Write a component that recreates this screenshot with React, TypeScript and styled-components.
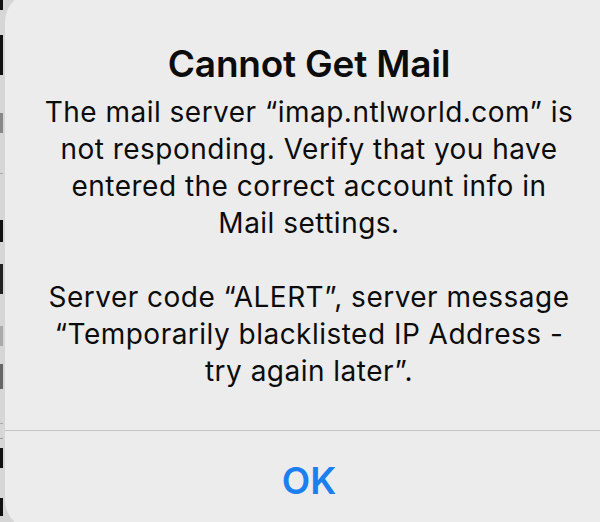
import React from "react";
import styled, { createGlobalStyle } from "styled-components";

const Global = createGlobalStyle`
  html, body { margin: 0; padding: 0; }
  body { background: #d3d3d3; font-family: Inter, "Noto Sans", sans-serif; }
  #root { width: 600px; height: 522px; overflow: hidden; }
`;

const Screen = styled.div`
  display: flex;
  width: 600px;
  height: 522px;
  overflow: hidden;
  background: #d6d6d6;
`;

const Strip = styled.div`
  flex: 0 0 5px;
  display: flex;
  flex-direction: column;
`;

const Bar = styled.div<{ $h: number; $gap: number; $c: string; $w?: number }>`
  height: ${(p) => p.$h}px;
  margin-top: ${(p) => p.$gap}px;
  width: ${(p) => p.$w ?? 3}px;
  background: ${(p) => p.$c};
`;

const Card = styled.div`
  flex: 0 0 608px;
  margin-top: -8px;
  height: 538px;
  background: #ececec;
  border-radius: 30px;
  display: flex;
  flex-direction: column;
  color: #0c0c0c;
`;

const Content = styled.div`
  display: flex;
  flex-direction: column;
  align-items: center;
  padding: 50px 0 0;
  height: 438px;
  box-sizing: border-box;
`;

const Title = styled.h1`
  margin: 0;
  font-size: 37px;
  font-weight: 600;
  line-height: 44px;
  letter-spacing: -0.2px;
  text-align: center;
`;

const Message = styled.p`
  margin: 8px 0 0;
  font-size: 28px;
  font-weight: 400;
  line-height: 37px;
  letter-spacing: 0.48px;
  text-align: center;
  white-space: pre;
`;

const Separator = styled.div`
  height: 1px;
  background: #c4c4c4;
`;

const Action = styled.button`
  border: 0;
  background: transparent;
  height: 99px;
  padding: 0;
  font-family: Inter, "Noto Sans", sans-serif;
  font-size: 37px;
  font-weight: 600;
  color: #1b7ff0;
  cursor: pointer;
`;

const bars = [
  { h: 10, gap: 0, c: "#111" },
  { h: 40, gap: 25, c: "#111" },
  { h: 20, gap: 38, c: "#888" },
  { h: 1, gap: 40, c: "#aaa" },
  { h: 22, gap: 46, c: "#111" },
  { h: 30, gap: 22, c: "#222" },
  { h: 20, gap: 32, c: "#aaa" },
  { h: 25, gap: 18, c: "#666" },
  { h: 1, gap: 34, c: "#aaa" },
  { h: 1, gap: 14, c: "#999" },
  { h: 20, gap: 9, c: "#111" },
  { h: 18, gap: 30, c: "#111" },
];

const messageLines = [
  "The mail server \u201Cimap.ntlworld.com\u201D is",
  "not responding. Verify that you have",
  "entered the correct account info in",
  "Mail settings.",
  "",
  "Server code \u201CALERT\u201D, server message",
  "\u201CTemporarily blacklisted IP Address -",
  "try again later\u201D.",
];

export default function App() {
  return (
    <>
      <Global />
      <Screen>
        <Strip>
          {bars.map((b, i) => (
            <Bar key={i} $h={b.h} $gap={b.gap} $c={b.c} />
          ))}
        </Strip>
        <Card>
          <Content>
            <Title>Cannot Get Mail</Title>
            <Message>{messageLines.join("\n")}</Message>
          </Content>
          <Separator />
          <Action>OK</Action>
        </Card>
      </Screen>
    </>
  );
}
